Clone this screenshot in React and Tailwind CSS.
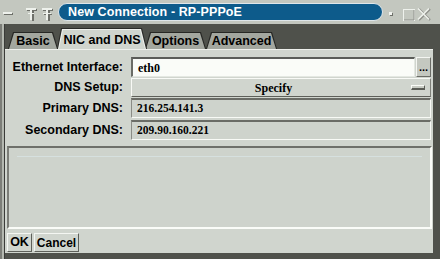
const sans = "font-['Liberation_Sans',Arial,sans-serif]";
const serif = "font-['Liberation_Serif','Times_New_Roman',serif]";

function Tab({ label, active, className }) {
  if (active) {
    return (
      <div className={`relative z-10 h-[21px] bg-[#2a2b28] [clip-path:polygon(4px_0,calc(100%_-_5px)_0,100%_100%,0_100%)] ${className}`}>
        <div className="absolute inset-x-[1px] top-[1px] bottom-0 bg-[#eef0ec] [clip-path:polygon(4px_0,calc(100%_-_5px)_0,100%_100%,0_100%)]">
          <div className="absolute inset-x-[1px] top-[1px] bottom-0 flex items-center justify-center bg-[#d0d5ce] pt-[1px] text-[12.5px] font-bold text-black [clip-path:polygon(4px_0,calc(100%_-_5px)_0,100%_100%,0_100%)]">
            {label}
          </div>
        </div>
      </div>
    );
  }
  return (
    <div className={`relative h-[17px] bg-[#262724] [clip-path:polygon(5px_0,calc(100%_-_5px)_0,100%_100%,0_100%)] ${className}`}>
      <div className="absolute inset-x-[1px] top-[1px] bottom-0 flex items-center justify-center bg-[#a3a79f] text-[12.5px] font-bold text-black [clip-path:polygon(5px_0,calc(100%_-_5px)_0,100%_100%,0_100%)]">
        {label}
      </div>
    </div>
  );
}

function Label({ children }) {
  return (
    <div className="w-[119px] shrink-0 pr-[1px] text-right text-[12.5px] font-bold text-black">{children}</div>
  );
}

function SunkenField({ value, className }) {
  return (
    <div className={`ml-[7px] flex h-full flex-1 items-center border-t-2 border-l border-b border-r border-t-[#6a6c66] border-l-[#8a8c86] border-b-[#f8faf6] border-r-[#f8faf6] bg-[#ced3cc] pl-[5px] text-[11.5px] font-bold text-black ${serif} ${className}`}>
      {value}
    </div>
  );
}

export default function App() {
  return (
    <div className={`flex h-[259px] w-[440px] flex-col overflow-hidden bg-[#4f514b] ${sans}`}>
      {/* title bar */}
      <div className="relative flex h-[24px] shrink-0 items-center bg-[#c3c7bf]">
        <svg width="58" height="24" viewBox="0 0 58 24" className="shrink-0">
          <g fill="#6e706a">
            <rect x="4" y="13" width="9" height="2" />
            <rect x="27" y="9" width="10" height="2" />
            <rect x="32" y="9" width="2" height="12" />
            <rect x="43" y="9" width="10" height="2" />
            <rect x="48" y="9" width="2" height="12" />
            <rect x="44" y="14" width="8" height="1" />
          </g>
          <g fill="#eef1ec">
            <rect x="3" y="12" width="9" height="2" />
            <rect x="26" y="8" width="10" height="2" />
            <rect x="30" y="8" width="2" height="12" />
            <rect x="28" y="13" width="6" height="1" />
            <rect x="42" y="8" width="10" height="2" />
            <rect x="46" y="8" width="2" height="12" />
            <rect x="43" y="13" width="8" height="1" />
          </g>
        </svg>
        <div className="flex h-[18px] w-[325px] items-center rounded-full border border-[#dfe6ea] bg-[#0d5b8b] pl-[9px] pt-[1px] text-[12.5px] font-bold tracking-[0.1px] text-white">
          New Connection - RP-PPPoE
        </div>
        <svg width="57" height="24" viewBox="0 0 57 24" className="shrink-0">
          <rect x="7" y="13" width="3" height="3" fill="#6e706a" />
          <rect x="6" y="12" width="3" height="3" fill="#f2f4f0" />
          <rect x="20.5" y="9.5" width="11" height="11" fill="none" stroke="#eef1ec" />
          <path d="M31 10 V20 H21" fill="none" stroke="#8e908a" />
          <path d="M36 9 L47 20 M47 9 L36 20" stroke="#8e908a" strokeWidth="2.2" />
          <path d="M35 8.5 L46 19.5 M46 8.5 L35 19.5" stroke="#eef1ec" strokeWidth="1.6" />
        </svg>
      </div>

      <div className="flex flex-1">
        {/* left window frame */}
        <div className="w-[5px] shrink-0 border-l-2 border-r border-l-[#7c7e78] border-r-[#3a3b38] bg-[#b4b8b0]" />

        <div className="flex flex-1 flex-col pb-[6px] pr-[7px]">
          {/* tabs */}
          <div className="flex h-[25px] shrink-0 items-end pl-[3px]">
            <Tab label="Basic" className="w-[50px]" />
            <Tab label="NIC and DNS" active className="-ml-[1px] w-[90px]" />
            <Tab label="Options" className="-ml-[2px] w-[61px]" />
            <Tab label="Advanced" className="w-[71px]" />
          </div>

          {/* panel */}
          <div className="flex flex-1 flex-col border-t border-[#eef0ec] bg-[#d0d5ce]">
            <div className="flex flex-col pr-[2px] pt-[7px]">
              <div className="flex h-[20px] items-center">
                <Label>Ethernet Interface:</Label>
                <div className={`ml-[7px] flex h-full flex-1 items-center border-t-2 border-l-2 border-b border-r border-t-[#5a5c58] border-l-[#6a6c66] border-b-[#e4e8e2] border-r-[#e4e8e2] bg-[#fafcf8] pl-[5px] text-[12px] font-bold text-black ${serif}`}>
                  eth0
                </div>
                <div className="ml-[1px] flex h-full w-[15px] items-end justify-center border-t border-l border-b border-r border-t-[#f4f6f2] border-l-[#f4f6f2] border-b-[#6a6c66] border-r-[#6a6c66] bg-[#c4c8c0] pb-[3px] text-[11px] font-bold leading-none text-black">
                  ...
                </div>
              </div>
              <div className="mt-[1px] flex h-[19px] items-center">
                <Label>DNS Setup:</Label>
                <div className="ml-[7px] flex h-full flex-1 items-center border-t border-l border-b border-r border-t-[#f8faf6] border-l-[#f8faf6] border-b-[#5e605a] border-r-[#7e8079] bg-[#d0d5ce]">
                  <div className={`flex-1 pl-[4px] text-center text-[12px] font-bold text-black ${serif}`}>Specify</div>
                  <div className="mr-[5px] h-[5px] w-[14px] border-t border-l border-b-2 border-r border-t-[#fafcf8] border-l-[#fafcf8] border-b-[#5a5c56] border-r-[#5a5c56] bg-[#c8ccc4]" />
                </div>
              </div>
              <div className="mt-[1px] flex h-[20px] items-center">
                <Label>Primary DNS:</Label>
                <SunkenField value="216.254.141.3" />
              </div>
              <div className="mt-[2px] flex h-[20px] items-center">
                <Label>Secondary DNS:</Label>
                <SunkenField value="209.90.160.221" />
              </div>
            </div>

            {/* empty sunken area */}
            <div className="ml-[2px] mr-[1px] mt-[6px] flex flex-1 flex-col border-t-2 border-l-2 border-b-2 border-r-2 border-t-[#6e706a] border-l-[#7c7e78] border-b-[#fafcf8] border-r-[#fafcf8] bg-[#ced3cc]">
              <div className="mx-[8px] mt-[8px] h-[1px] bg-[#d6e0df]" />
            </div>

            {/* buttons */}
            <div className="flex h-[24px] shrink-0 items-start gap-[2px] pl-[2px] pt-[4px]">
              <div className="flex h-[19px] w-[25px] items-center justify-center border-t border-l border-b border-r border-t-[#f4f6f2] border-l-[#f4f6f2] border-b-[#5e605a] border-r-[#5e605a] bg-[#d0d5ce] text-[12.5px] font-bold text-black">
                OK
              </div>
              <div className="flex h-[19px] w-[45px] items-center justify-center border-t border-l border-b border-r border-t-[#f4f6f2] border-l-[#f4f6f2] border-b-[#5e605a] border-r-[#5e605a] bg-[#d0d5ce] text-[12px] font-bold text-black">
                Cancel
              </div>
            </div>
          </div>
        </div>
      </div>
    </div>
  );
}
